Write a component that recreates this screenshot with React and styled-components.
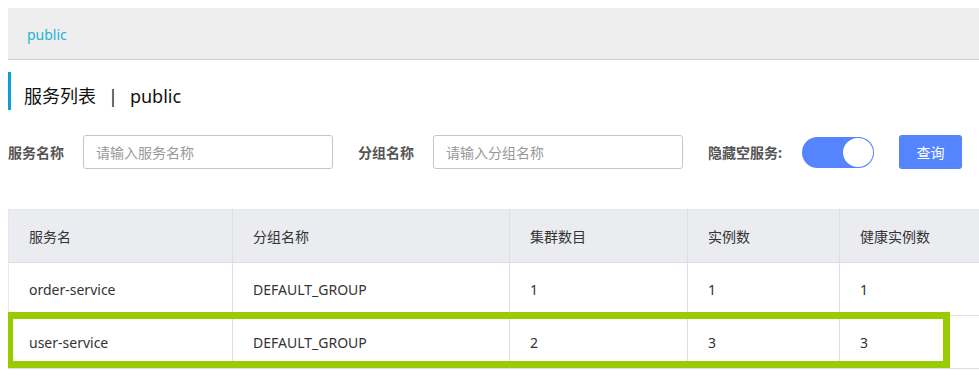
import React from 'react'
import styled, { createGlobalStyle } from 'styled-components'

const GlobalStyle = createGlobalStyle`
  html, body {
    overflow: hidden;
  }
  body {
    margin: 8px 0 8px 8px;
    background: #fff;
    font-family: "Noto Sans", "Noto Sans CJK SC", sans-serif;
    color: #333;
  }
`

const Page = styled.div`
  width: 971px;
`

const Breadcrumb = styled.div`
  height: 49px;
  line-height: 49px;
  padding: 2px 0 0 19px;
  background: #eeeeee;
  border-bottom: 1px solid #cccccc;
  font-size: 14px;
  color: #24b3d6;
`

const Title = styled.div`
  margin-top: 12px;
  height: 38px;
  box-sizing: border-box;
  padding: 12px 0 0 13px;
  border-left: 3px solid #0a9fd6;
  font-size: 18px;
  line-height: 24px;
  color: #111;
`

const Divider = styled.span`
  margin: 0 12px;
  color: #222;
`

const FilterRow = styled.div`
  display: flex;
  align-items: center;
  margin-top: 25px;
  height: 34px;
`

const Field = styled.div`
  display: flex;
  align-items: center;
  margin-right: 25px;
`

const Label = styled.label`
  font-size: 14px;
  font-weight: bold;
  color: #555;
  margin-right: ${({ gap }) => gap || 19}px;
  white-space: nowrap;
`

const Input = styled.input`
  width: 250px;
  height: 34px;
  box-sizing: border-box;
  padding: 0 12px;
  border: 1px solid #c4c6cf;
  border-radius: 3px;
  font-family: inherit;
  font-size: 14px;
  outline: none;
  &::placeholder {
    color: #999;
  }
`

const Switch = styled.div`
  width: 72px;
  height: 31px;
  box-sizing: border-box;
  border-radius: 16px;
  background: #5584ff;
  display: flex;
  justify-content: flex-end;
  align-items: center;
  padding-right: 1px;
`

const Knob = styled.div`
  width: 30px;
  height: 29px;
  border-radius: 50%;
  background: #fff;
`

const Button = styled.button`
  width: 63px;
  height: 34px;
  border: none;
  border-radius: 3px;
  background: #5584ff;
  color: #fff;
  font-family: inherit;
  font-size: 14px;
  padding: 0;
`

const TableWrap = styled.div`
  position: relative;
  margin-top: 40px;
`

const Table = styled.table`
  width: 100%;
  border-collapse: collapse;
  table-layout: fixed;
  border-top: 1px solid #e6e7eb;
  border-left: 1px solid #e6e7eb;
`

const Th = styled.th`
  height: 52px;
  padding: 0 0 0 20px;
  background: #ebecf0;
  text-align: left;
  font-weight: normal;
  font-size: 14px;
  color: #333;
  border-right: 1px solid #dcdee3;
  border-bottom: 1px solid #dcdee3;
  &:last-child {
    border-right: none;
  }
`

const Td = styled.td`
  height: 52px;
  padding: 0 0 0 20px;
  font-size: 14px;
  color: #333;
  border-right: 1px solid #dcdee3;
  border-bottom: 1px solid #dcdee3;
  &:last-child {
    border-right: none;
  }
`

const Highlight = styled.div`
  position: absolute;
  left: -2px;
  top: 103px;
  width: 944px;
  height: 56px;
  box-sizing: border-box;
  border: 7px solid #99cc00;
  pointer-events: none;
`

const columns = [
  { title: '服务名', width: 224 },
  { title: '分组名称', width: 277 },
  { title: '集群数目', width: 178 },
  { title: '实例数', width: 152 },
  { title: '健康实例数' },
]

const rows = [
  ['order-service', 'DEFAULT_GROUP', '1', '1', '1'],
  ['user-service', 'DEFAULT_GROUP', '2', '3', '3'],
]

export default function App() {
  return (
    <Page>
      <GlobalStyle />
      <Breadcrumb>public</Breadcrumb>
      <Title>
        服务列表<Divider>|</Divider>public
      </Title>
      <FilterRow>
        <Field>
          <Label>服务名称</Label>
          <Input placeholder="请输入服务名称" />
        </Field>
        <Field>
          <Label>分组名称</Label>
          <Input placeholder="请输入分组名称" />
        </Field>
        <Field>
          <Label gap={20}>隐藏空服务:</Label>
          <Switch>
            <Knob />
          </Switch>
        </Field>
        <Button>查询</Button>
      </FilterRow>
      <TableWrap>
        <Table>
          <colgroup>
            {columns.map((c) => (
              <col key={c.title} style={c.width ? { width: c.width } : undefined} />
            ))}
          </colgroup>
          <thead>
            <tr>
              {columns.map((c) => (
                <Th key={c.title}>{c.title}</Th>
              ))}
            </tr>
          </thead>
          <tbody>
            {rows.map((r) => (
              <tr key={r[0]}>
                {r.map((v, i) => (
                  <Td key={i}>{v}</Td>
                ))}
              </tr>
            ))}
          </tbody>
        </Table>
        <Highlight />
      </TableWrap>
    </Page>
  )
}
